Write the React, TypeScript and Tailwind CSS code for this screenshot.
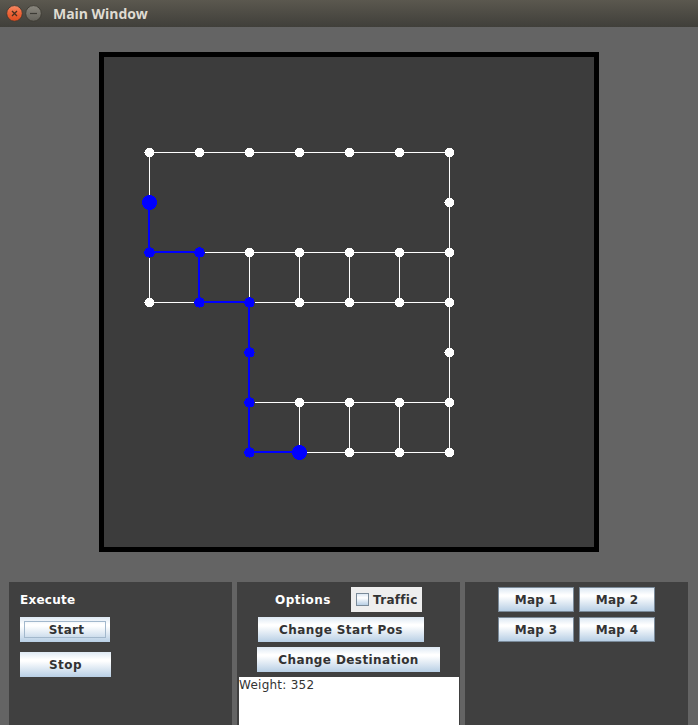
import React from 'react';

type Point = [number, number];

const whiteLines: [number, number, number, number][] = [
  [149, 152, 449, 152],
  [149, 252, 449, 252],
  [149, 302, 449, 302],
  [249, 402, 449, 402],
  [249, 452, 449, 452],
  [149, 152, 149, 302],
  [449, 152, 449, 452],
  [249, 252, 249, 302],
  [299, 252, 299, 302],
  [349, 252, 349, 302],
  [399, 252, 399, 302],
  [299, 402, 299, 452],
  [349, 402, 349, 452],
  [399, 402, 399, 452],
];

const whiteNodes: Point[] = [
  [149, 152], [199, 152], [249, 152], [299, 152], [349, 152], [399, 152], [449, 152],
  [449, 202],
  [249, 252], [299, 252], [349, 252], [399, 252], [449, 252],
  [149, 302], [299, 302], [349, 302], [399, 302], [449, 302],
  [449, 352],
  [299, 402], [349, 402], [399, 402], [449, 402],
  [349, 452], [399, 452], [449, 452],
];

const route: Point[] = [
  [149, 202], [149, 252], [199, 252], [199, 302], [249, 302],
  [249, 352], [249, 402], [249, 452], [299, 452],
];

function MapCanvas() {
  return (
    <svg className="block h-[490px] w-[490px]" viewBox="104 57 490 490" shapeRendering="crispEdges">
      {whiteLines.map(([x1, y1, x2, y2], i) => (
        <line key={i} x1={x1 + 0.5} y1={y1 + 0.5} x2={x2 + 0.5} y2={y2 + 0.5} stroke="#fff" strokeWidth="1" />
      ))}
      {whiteNodes.map(([x, y], i) => (
        <g key={i} fill="#fff">
          <circle cx={x + 0.5} cy={y + 0.5} r="4.7" />
          <rect x={x - 5} y={y} width="1" height="1" />
        </g>
      ))}
      <polyline points={route.map(([x, y]) => `${x},${y}`).join(' ')} fill="none" stroke="#00f" strokeWidth="2" />
      {route.map(([x, y], i) => (
        <circle key={i} cx={x + 0.5} cy={y + 0.5} r={i === 0 || i === route.length - 1 ? 7.5 : 5.2} fill="#00f" />
      ))}
    </svg>
  );
}

function SwingButton({ label, className = '', focused = false }: { label: string; className?: string; focused?: boolean }) {
  return (
    <button
      className={`h-[25px] shrink-0 bg-[linear-gradient(#dde8f3_0%,#ffffff_30%,#ffffff_36%,#b8cfe5_100%)] p-1 text-[#333333] ${className}`}
    >
      <span className={`flex h-[17px] items-center justify-center pt-[2px] whitespace-nowrap ${focused ? 'border border-[#a3b8cc] pl-[3px]' : ''}`}>
        {label}
      </span>
    </button>
  );
}

export default function App() {
  return (
    <div className="flex h-[725px] w-[698px] flex-col overflow-hidden bg-[#646464] font-['DejaVu_Sans',sans-serif] text-[12px] leading-[15px] font-bold">
      <header className="flex h-[27px] shrink-0 items-center bg-linear-to-b from-[#5b584f] to-[#403f3a] pl-[6px]">
        <svg className="h-[27px] w-[38px] shrink-0" viewBox="6 0 38 27">
          <defs>
            <linearGradient id="close" x1="0" y1="0" x2="0" y2="1">
              <stop offset="0" stopColor="#f68b66" />
              <stop offset="0.5" stopColor="#ee6437" />
              <stop offset="1" stopColor="#df4d20" />
            </linearGradient>
            <linearGradient id="minimize" x1="0" y1="0" x2="0" y2="1">
              <stop offset="0" stopColor="#8b887f" />
              <stop offset="1" stopColor="#64625b" />
            </linearGradient>
          </defs>
          <circle cx="14.5" cy="13.4" r="7.8" fill="url(#close)" stroke="#38362f" strokeWidth="0.8" />
          <path d="M12 11l5 5M17 11l-5 5" stroke="#49301f" strokeWidth="1.3" />
          <circle cx="33.5" cy="13.4" r="7.8" fill="url(#minimize)" stroke="#38362f" strokeWidth="0.8" />
          <path d="M30 13.5h7" stroke="#3c3b35" strokeWidth="1.2" />
        </svg>
        <h1 className="ml-[9px] font-['Open_Sans','Noto_Sans',sans-serif] text-[14px] leading-[20px] font-bold tracking-[-0.05px] text-[#dfdbd2]">Main Window</h1>
      </header>

      <main className="mt-[25px] ml-[99px] h-[500px] w-[500px] shrink-0 border-[5px] border-black bg-[#3c3c3c]">
        <MapCanvas />
      </main>

      <div className="mt-[30px] ml-[9px] flex h-[143px] gap-[5px]">
        <section className="flex w-[223px] flex-col items-start bg-[#404040] pt-[11px] pl-[11px]">
          <h2 className="tracking-[0.25px] text-white">Execute</h2>
          <SwingButton label="Start" focused className="mt-[9px] w-[90px] tracking-[0.3px]" />
          <SwingButton label="Stop" className="mt-[10px] w-[91px] tracking-[0.4px]" />
        </section>

        <section className="flex w-[223px] flex-col bg-[#404040] pt-[5px]">
          <div className="flex h-[25px] items-center pl-[38px]">
            <h2 className="w-[76px] pt-[2px] tracking-[0.45px] text-white">Options</h2>
            <label className="flex h-[25px] w-[71px] items-center bg-[#eeeeee] pl-[5px] text-[#333333]">
              <span className="mr-1 h-[13px] w-[13px] shrink-0 border border-[#7a8a99] bg-[linear-gradient(#dde8f3_0%,#ffffff_35%,#b8cfe5_100%)]" />
              <span className="pt-[2px] tracking-[0.3px]">Traffic</span>
            </label>
          </div>
          <SwingButton label="Change Start Pos" className="mt-[5px] ml-[21px] w-[166px] tracking-[0.4px]" />
          <SwingButton label="Change Destination" className="mt-[5px] ml-5 w-[183px] tracking-[0.4px]" />
          <div className="mt-[5px] ml-[2px] h-[48px] w-[220px] bg-white pt-px font-normal tracking-[0.25px] text-[#333333]">Weight: 352</div>
        </section>

        <section className="w-[223px] bg-[#404040] pt-[5px] pl-[33px]">
          <div className="grid w-[157px] grid-cols-2 gap-[5px]">
            {['Map 1', 'Map 2', 'Map 3', 'Map 4'].map((name) => (
              <SwingButton key={name} label={name} className="w-[76px] border border-[#7a8a99] !p-[3px] tracking-[0.3px]" />
            ))}
          </div>
        </section>
      </div>
    </div>
  );
}
